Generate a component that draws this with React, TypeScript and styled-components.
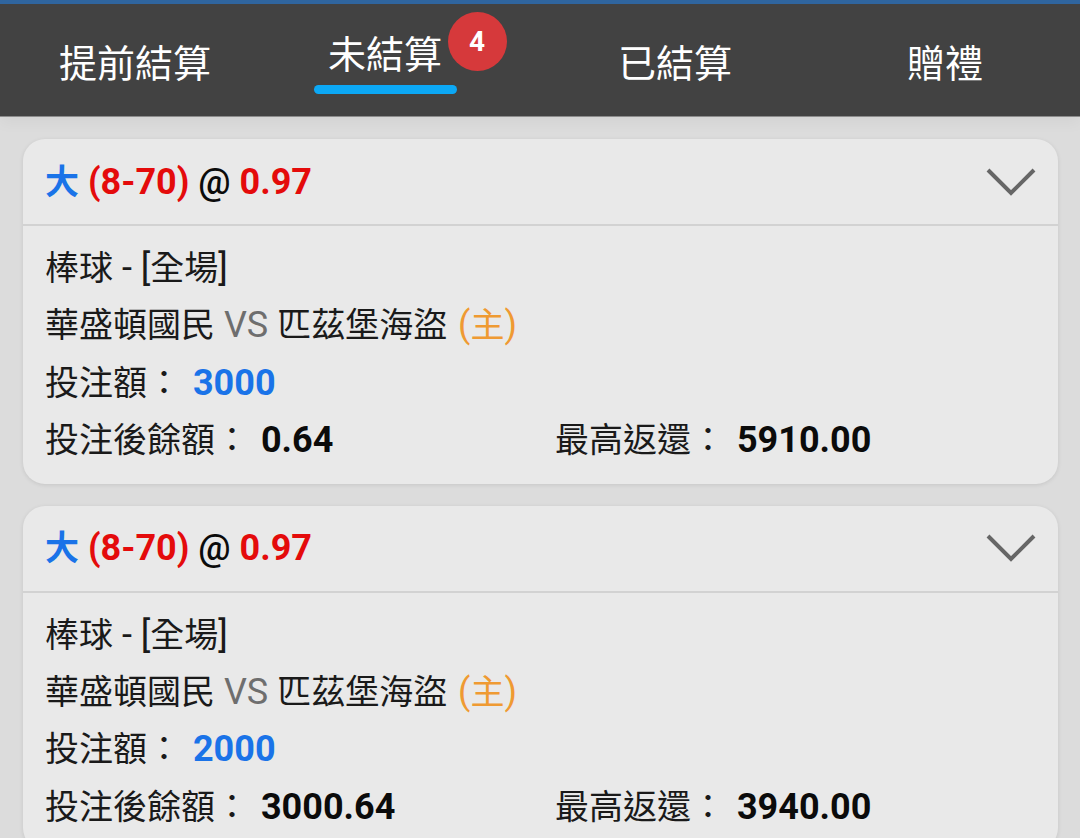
import styled, { createGlobalStyle } from "styled-components";

const GlobalStyle = createGlobalStyle`
  html, body {
    margin: 0;
    padding: 0;
    height: 838px;
    overflow: hidden;
    background: #dcdcdc;
    font-family: Roboto, "Noto Sans CJK TC", sans-serif;
  }
`;

const Page = styled.div`
  width: 1080px;
  height: 838px;
  overflow: hidden;
  background: #dcdcdc;
`;

const TabBar = styled.div`
  display: grid;
  grid-template-columns: repeat(4, 270px);
  height: 117px;
  box-sizing: border-box;
  background: #424242;
  border-top: 4px solid #2f659f;
  border-bottom: 1px solid #8c8c8c;
  box-shadow: 0 6px 14px rgba(0, 0, 0, 0.04);
`;

const Tab = styled.div<{ $active?: boolean }>`
  display: flex;
  justify-content: center;
  padding-top: ${(p) => (p.$active ? "27px" : "36px")};
  padding-right: ${(p) => (p.$active ? "40px" : "0")};
  font-size: 38px;
  line-height: 48px;
  color: #fff;
`;

const ActiveLabel = styled.div`
  position: relative;
  width: 143px;
  height: 54px;
  text-align: center;

  &::after {
    content: "";
    position: absolute;
    left: 0;
    right: 0;
    top: 54px;
    height: 9px;
    border-radius: 5px;
    background: #0ca8f5;
  }
`;

const Badge = styled.span`
  position: absolute;
  left: 134px;
  top: -19px;
  width: 59px;
  height: 59px;
  border-radius: 50%;
  background: #d6393b;
  color: #fff;
  font-size: 28px;
  font-weight: 700;
  line-height: 59px;
  text-align: center;
`;

const List = styled.div`
  display: flex;
  flex-direction: column;
  gap: 22px;
  padding: 22px 22px 0 23px;
`;

const Card = styled.div`
  border-radius: 22px;
  background: #e9e9e9;
  box-shadow: 0 1px 4px rgba(0, 0, 0, 0.1);
`;

const CardHeader = styled.div`
  display: flex;
  align-items: center;
  justify-content: space-between;
  height: 85px;
  padding: 0 23px;
  border-bottom: 2px solid #d2d2d2;
  font-size: 36px;
  line-height: 40px;
  font-weight: 700;
`;

const Title = styled.div`
  color: #0b0b0b;
  white-space: pre;
  margin-left: -1px;
`;

const Blue = styled.span`
  color: #1a73e8;
  font-size: 34px;
`;

const Red = styled.span`
  color: #e40b0b;
`;

const At = styled.span`
  color: #0b0b0b;
  font-weight: 500;
`;

const Chevron = styled.svg`
  display: block;
  width: 50px;
  height: 30px;
  margin-right: -1px;
  fill: none;
  stroke: #666;
  stroke-width: 4;
`;

const CardBody = styled.div`
  padding: 14px 23px 14px 22px;
  font-size: 36px;
  line-height: 57.4px;
  color: #1a1a1a;
`;

const Line = styled.div`
  display: flex;
  white-space: pre;
  height: 57.4px;
`;

const Cell = styled.div`
  flex: none;
  width: 510px;
  white-space: pre;
`;

const Zh = styled.span`
  font-size: 34px;
`;

const Muted = styled.span`
  color: #6e6e6e;
`;

const Orange = styled.span`
  color: #ef9a32;
  margin-left: 2px;
`;

const Amount = styled.span<{ $blue?: boolean }>`
  font-weight: 700;
  margin-left: 3px;
  color: ${(p) => (p.$blue ? "#1a73e8" : "#0b0b0b")};
`;

const bets = [
  { stake: "3000", after: "0.64", payout: "5910.00" },
  { stake: "2000", after: "3000.64", payout: "3940.00" },
];

const App = () => {
  return (
    <Page>
      <GlobalStyle />
      <TabBar>
        <Tab>提前結算</Tab>
        <Tab $active>
          <ActiveLabel>
            未結算
            <Badge>4</Badge>
          </ActiveLabel>
        </Tab>
        <Tab>已結算</Tab>
        <Tab>贈禮</Tab>
      </TabBar>
      <List>
        {bets.map((bet) => (
          <Card key={bet.stake}>
            <CardHeader>
              <Title>
                <Blue>大</Blue> <Red>(8-70)</Red> <At>@</At> <Red>0.97</Red>
              </Title>
              <Chevron viewBox="0 0 50 30">
                <polyline points="2,3 25,26 48,3" />
              </Chevron>
            </CardHeader>
            <CardBody>
              <Line>
                <span>
                  <Zh>棒球</Zh> - [<Zh>全場</Zh>]
                </span>
              </Line>
              <Line>
                <span>
                  <Zh>華盛頓國民</Zh> <Muted>VS</Muted> <Zh>匹茲堡海盜</Zh>{" "}
                  <Orange>
                    (<Zh>主</Zh>)
                  </Orange>
                </span>
              </Line>
              <Line>
                <span>
                  <Zh>投注額：</Zh> <Amount $blue>{bet.stake}</Amount>
                </span>
              </Line>
              <Line>
                <Cell>
                  <Zh>投注後餘額：</Zh> <Amount>{bet.after}</Amount>
                </Cell>
                <Cell>
                  <Zh>最高返還：</Zh> <Amount>{bet.payout}</Amount>
                </Cell>
              </Line>
            </CardBody>
          </Card>
        ))}
      </List>
    </Page>
  );
};

export default App;
